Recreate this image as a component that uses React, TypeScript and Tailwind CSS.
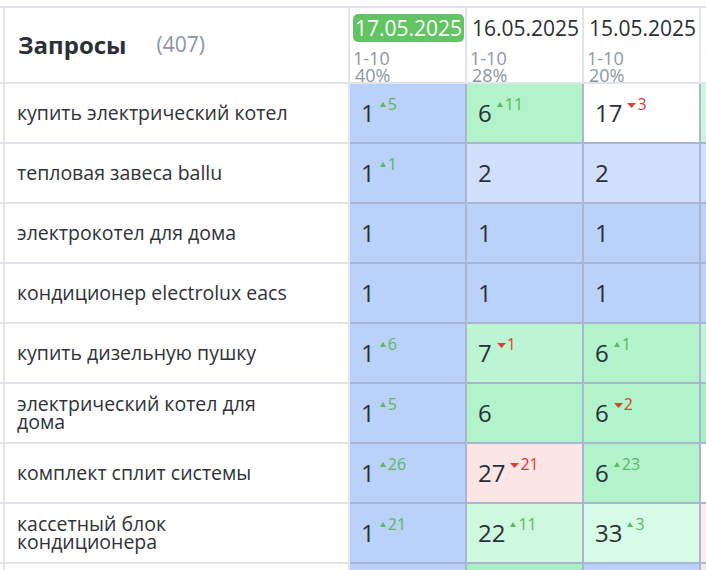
import React from "react";

type Cell = { v: string; d?: number; bg: string };
type Row = { q: string; cells: Cell[] };

const B = "bg-[#bad1f9]";
const LB = "bg-[#d1dffa]";
const G = "bg-[#b2f3cb]";
const G2 = "bg-[#bcf5d2]";
const G3 = "bg-[#a8efc1]";
const LG = "bg-[#cef9de]";
const LG2 = "bg-[#d6fbe6]";
const LG3 = "bg-[#cdf7dc]";
const P = "bg-[#fbe5e5]";
const LP = "bg-[#fcecec]";
const W = "bg-white";

const rows: Row[] = [
  { q: "купить электрический котел", cells: [{ v: "1", d: 5, bg: B }, { v: "6", d: 11, bg: G }, { v: "17", d: -3, bg: W }, { v: "", bg: LG3 }] },
  { q: "тепловая завеса ballu", cells: [{ v: "1", d: 1, bg: B }, { v: "2", bg: LB }, { v: "2", bg: LB }, { v: "", bg: LB }] },
  { q: "электрокотел для дома", cells: [{ v: "1", bg: B }, { v: "1", bg: B }, { v: "1", bg: B }, { v: "", bg: B }] },
  { q: "кондиционер electrolux eacs", cells: [{ v: "1", bg: B }, { v: "1", bg: B }, { v: "1", bg: B }, { v: "", bg: B }] },
  { q: "купить дизельную пушку", cells: [{ v: "1", d: 6, bg: B }, { v: "7", d: -1, bg: G2 }, { v: "6", d: 1, bg: G }, { v: "", bg: G2 }] },
  { q: "электрический котел для дома", cells: [{ v: "1", d: 5, bg: B }, { v: "6", bg: G }, { v: "6", d: -2, bg: G }, { v: "", bg: G3 }] },
  { q: "комплект сплит системы", cells: [{ v: "1", d: 26, bg: B }, { v: "27", d: -21, bg: P }, { v: "6", d: 23, bg: G }, { v: "", bg: W }] },
  { q: "кассетный блок кондиционера", cells: [{ v: "1", d: 21, bg: B }, { v: "22", d: 11, bg: LG }, { v: "33", d: 3, bg: LG2 }, { v: "", bg: LP }] },
  { q: "обогреватель для дачи", cells: [{ v: "1", bg: B }, { v: "3", bg: G3 }, { v: "1", bg: B }, { v: "", bg: P }] },
];

const dates = [
  { d: "17.05.2025", p: "40%", active: true },
  { d: "16.05.2025", p: "28%" },
  { d: "15.05.2025", p: "20%" },
  { d: "14.05.2025", p: "18%" },
];

function Up() {
  return (
    <svg width="6" height="5" viewBox="0 0 6 5" className="mr-[2px] mt-[6px] shrink-0">
      <polygon points="3,0 6,5 0,5" fill="#5cb85c" />
    </svg>
  );
}
function Down() {
  return (
    <svg width="9" height="5" viewBox="0 0 9 5" className="mr-[1px] mt-[7px] shrink-0">
      <polygon points="0,0 9,0 4.5,5" fill="#e23b33" />
    </svg>
  );
}

export default function App() {
  return (
    <div
      className="w-[706px] h-[570px] overflow-hidden bg-white pt-[6px]"
      style={{ fontFamily: '"Open Sans", "Noto Sans", sans-serif' }}
    >
      {/* header */}
      <div className="flex h-[78px] border-t-2 border-b-2 border-[#e1e4e8] w-max">
        <div className="w-[5px] border-r-2 border-[#e1e4e8] shrink-0" />
        <div className="w-[345px] shrink-0 border-r-2 border-[#e1e4e8] flex items-center pl-[13px]">
          <span className="text-[24px] font-bold text-[#2b2f36]">Запросы</span>
          <span className="ml-[30px] text-[21px] text-[#8b95a7]">(407)</span>
        </div>
        {dates.map((d, i) => (
          <div key={i} className="w-[117px] shrink-0 border-r-2 border-[#e1e4e8] pl-[3px] pt-[6px]">
            <span
              className={
                "inline-block h-[28px] leading-[28px] px-[2px] rounded-[5px] text-[21px] whitespace-nowrap " +
                (d.active ? "bg-[#62c462] text-white" : "text-[#2b2f36]")
              }
            >
              {d.d}
            </span>
            <div className="mt-[8px] text-[18px] leading-[17px] text-[#8e96a3]">
              <div>1-10</div>
              <div className="pl-[2px]">{d.p}</div>
            </div>
          </div>
        ))}
      </div>
      {rows.map((r, ri) => (
        <div key={ri} className="flex h-[60px] w-max">
          <div className="w-[5px] border-r-2 border-b-2 border-[#e1e4e8] shrink-0" />
          <div className="w-[345px] shrink-0 border-r-2 border-b-2 border-[#e1e4e8] flex items-center pl-[12px]">
            <span className="max-w-[278px] text-[19.5px] leading-[18px] text-[#2f3237]">{r.q}</span>
          </div>
          {r.cells.map((c, ci) => (
            <div
              key={ci}
              className={"w-[117px] shrink-0 border-r-2 border-b-2 border-[#a9b5d3] flex items-center pl-[11px] " + c.bg}
            >
              {c.v && (
                <div className="flex items-start">
                  <span className="text-[24px] leading-[30px] text-[#2b2f36]">{c.v}</span>
                  {c.d !== undefined && (
                    <div className="flex items-start ml-[5px] mt-[-2px]">
                      {c.d > 0 ? <Up /> : <Down />}
                      <span
                        className={
                          "text-[16px] leading-[16px] " + (c.d > 0 ? "text-[#5cb85c]" : "text-[#e23b33]")
                        }
                      >
                        {Math.abs(c.d)}
                      </span>
                    </div>
                  )}
                </div>
              )}
            </div>
          ))}
        </div>
      ))}
    </div>
  );
}
